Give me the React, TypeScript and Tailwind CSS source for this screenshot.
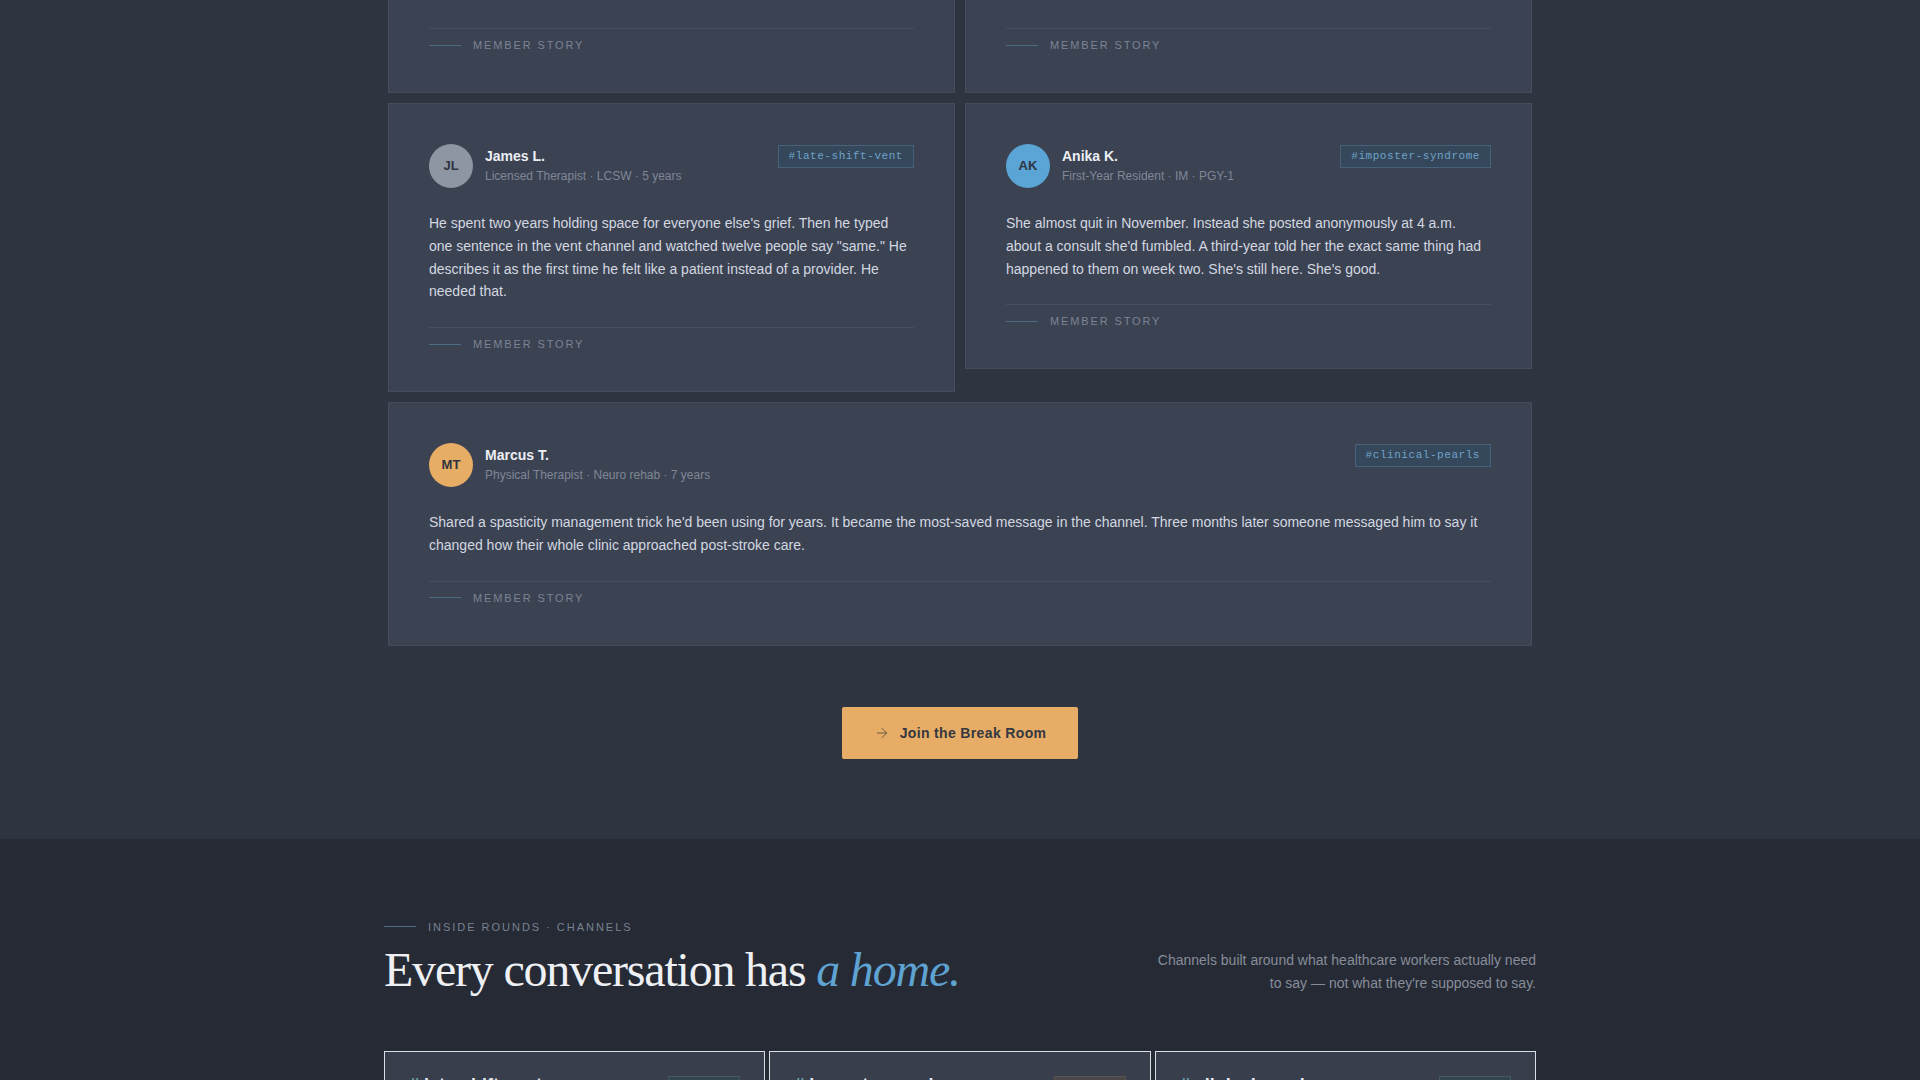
import React from 'react';
import { ArrowRight } from 'lucide-react';

type Story = {
    initials?: string;
    avatar?: string;
    name?: string;
    role?: string;
    channel?: string;
    body?: string;
    wide?: boolean;
};

const stories: Story[] = [
    {
        initials: 'JL',
        avatar: 'bg-[#8e96a4]',
        name: 'James L.',
        role: 'Licensed Therapist · LCSW · 5 years',
        channel: '#late-shift-vent',
        body: 'He spent two years holding space for everyone else\'s grief. Then he typed one sentence in the vent channel and watched twelve people say "same." He describes it as the first time he felt like a patient instead of a provider. He needed that.',
    },
    {
        initials: 'AK',
        avatar: 'bg-[#5ba5d6]',
        name: 'Anika K.',
        role: 'First-Year Resident · IM · PGY-1',
        channel: '#imposter-syndrome',
        body: 'She almost quit in November. Instead she posted anonymously at 4 a.m. about a consult she\'d fumbled. A third-year told her the exact same thing had happened to them on week two. She\'s still here. She\'s good.',
    },
    {
        initials: 'MT',
        avatar: 'bg-[#e8ad65]',
        name: 'Marcus T.',
        role: 'Physical Therapist · Neuro rehab · 7 years',
        channel: '#clinical-pearls',
        body: 'Shared a spasticity management trick he\'d been using for years. It became the most-saved message in the channel. Three months later someone messaged him to say it changed how their whole clinic approached post-stroke care.',
        wide: true,
    },
];

const channels = [
    { name: 'late-shift-vent', badge: 'Anon', tone: 'border-[#3f5b66] bg-[#34444d] text-[#7fb3bf]' },
    { name: 'imposter-syndrome', badge: 'Peer', tone: 'border-[#5a5453] bg-[#4a4546] text-[#b9aaa3]' },
    { name: 'clinical-pearls', badge: 'Saved', tone: 'border-[#3f5b66] bg-[#34444d] text-[#7fb3bf]' },
];

const StoryFooter = () => (
    <div className="mt-6 border-t border-[#474e5e] pt-2 flex items-center gap-3">
        <span className="w-8 h-px bg-[#4c6b87]" />
        <span className="text-[11px] leading-4 uppercase tracking-[0.17em] text-[#7c8494]">Member story</span>
    </div>
);

const StoryCard: React.FC<{ story: Story }> = ({ story }) => (
    <div className={`bg-[#3b4252] border border-[#454c5c] px-10 pt-10 pb-[39px] ${story.wide ? 'col-span-2' : ''}`}>
        <div className="flex items-start justify-between">
            <div className="flex items-center gap-3">
                <div className={`w-11 h-11 rounded-full flex items-center justify-center text-[13px] font-bold text-[#2e3440] ${story.avatar}`}>
                    {story.initials}
                </div>
                <div className="-mt-0.5">
                    <div className="text-sm leading-5 font-bold text-[#eceff4]">{story.name}</div>
                    <div className="mt-0.5 text-xs leading-4 text-[#7f8797]">{story.role}</div>
                </div>
            </div>
            <span className="mt-px px-2.5 py-[3px] leading-[15px] border border-[#46627b] bg-[#35475a] text-[11px] tracking-wider text-[#6fa3c9] font-['Liberation_Mono',monospace]">
                {story.channel}
            </span>
        </div>
        <p className="mt-6 text-sm leading-relaxed text-[#d3d8e0]">{story.body}</p>
        <StoryFooter />
    </div>
);

// cards of the row above, only their footers are in view
const CutCard = () => (
    <div className="bg-[#3b4252] border border-t-0 border-[#454c5c] px-10 pt-1 pb-[39px]">
        <StoryFooter />
    </div>
);

export default function App() {
    return (
        <div className="min-h-screen bg-[#252a35] font-['Liberation_Sans',Arial,sans-serif]">
            {/* stories */}
            <section className="bg-[#2f3441] pb-20">
                <div className="w-[1144px] mx-auto grid grid-cols-2 gap-[10px] items-start">
                    <CutCard />
                    <CutCard />
                    {stories.map((s) => (
                        <StoryCard key={s.name} story={s} />
                    ))}
                </div>
                <div className="mt-[61px] flex justify-center">
                    <button className="flex items-center gap-2.5 px-8 py-4 rounded-[2px] bg-[#e7ad67] text-sm leading-5 font-bold tracking-wide text-[#353840]">
                        <ArrowRight size={16} strokeWidth={1.5} className="text-[#6a5a46]" />
                        Join the Break Room
                    </button>
                </div>
            </section>

            {/* channels */}
            <section className="pt-20 pb-24">
                <div className="max-w-6xl mx-auto">
                    <div className="flex items-end justify-between">
                        <div>
                            <div className="flex items-center gap-3">
                                <span className="w-8 h-px bg-[#4c6b87]" />
                                <span className="text-[11px] leading-4 uppercase tracking-[0.18em] text-[#7a818f]">Inside Rounds · Channels</span>
                            </div>
                            <h2 className="mt-[10px] text-5xl leading-[1.06] tracking-tight text-[#eef0f4] font-['Liberation_Serif',serif]">
                                Every conversation has <em className="text-[#5fa3d3]">a home.</em>
                            </h2>
                        </div>
                        <p className="text-right text-sm leading-[1.65] text-[#878d99]">
                            Channels built around what healthcare workers actually need
                            <br />
                            to say — not what they're supposed to say.
                        </p>
                    </div>

                    <div className="mt-14 grid grid-cols-3 gap-1">
                        {channels.map((c) => (
                            <div key={c.name} className="bg-[#383e4c] border border-[#d9dde4] px-6 pt-6 pb-8 min-h-[220px]">
                                <div className="flex items-start justify-between">
                                    <div className="text-lg leading-none font-bold text-[#e5e9f0]">
                                        <span className="text-[#6fb0bb]">#</span> {c.name}
                                    </div>
                                    <span className={`w-[72px] text-center py-1 border text-[10px] uppercase tracking-[0.15em] ${c.tone}`}>
                                        {c.badge}
                                    </span>
                                </div>
                                <p className="mt-4 text-sm leading-relaxed text-[#9aa1ad]">
                                    A place to say it out loud, among people who already know.
                                </p>
                            </div>
                        ))}
                    </div>
                </div>
            </section>
        </div>
    );
}
